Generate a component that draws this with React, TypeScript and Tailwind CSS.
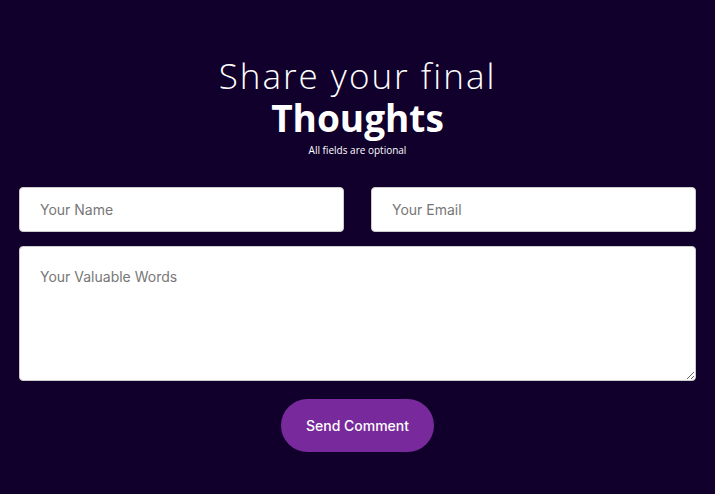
import React from "react";

export default function App() {
  return (
    <div className="min-h-[494px] w-full bg-[#10002b] px-[19px] pt-[55px] pb-[41px]" style={{ fontFamily: "'Open Sans', sans-serif" }}>
      <div className="flex flex-col items-center text-white">
        <h1 className="text-[35px] leading-[42px] font-light tracking-[2px]">Share your final</h1>
        <h2 className="text-[37px] leading-[41px] font-bold">Thoughts</h2>
        <p className="mt-[5px] text-[10px] leading-[14px]">All fields are optional</p>
      </div>
      <form className="mt-[30px] flex flex-col" onSubmit={(e) => e.preventDefault()}>
        <div className="grid grid-cols-2 gap-[27px]">
          <input
            type="text"
            placeholder="Your Name"
            className="h-[45px] rounded-[4px] border border-[#ccc] bg-white px-[20px] text-[14px] text-[#333] placeholder:text-[#777] outline-none"
            style={{ fontFamily: "'Inter', sans-serif" }}
          />
          <input
            type="email"
            placeholder="Your Email"
            className="h-[45px] rounded-[4px] border border-[#ccc] bg-white px-[20px] text-[14px] text-[#333] placeholder:text-[#777] outline-none"
            style={{ fontFamily: "'Inter', sans-serif" }}
          />
        </div>
        <textarea
          placeholder="Your Valuable Words"
          className="mt-[14px] h-[135px] resize-y rounded-[4px] border border-[#ccc] bg-white px-[20px] py-[21px] text-[14px] leading-[17px] text-[#333] placeholder:text-[#777] outline-none"
          style={{ fontFamily: "'Inter', sans-serif" }}
        />
        <div className="mt-[18px] flex justify-center">
          <button
            type="submit"
            className="h-[53px] w-[153px] rounded-full bg-[#782a9c] text-[14px] font-medium text-white"
            style={{ fontFamily: "'Inter', sans-serif" }}
          >
            Send Comment
          </button>
        </div>
      </form>
    </div>
  );
}
